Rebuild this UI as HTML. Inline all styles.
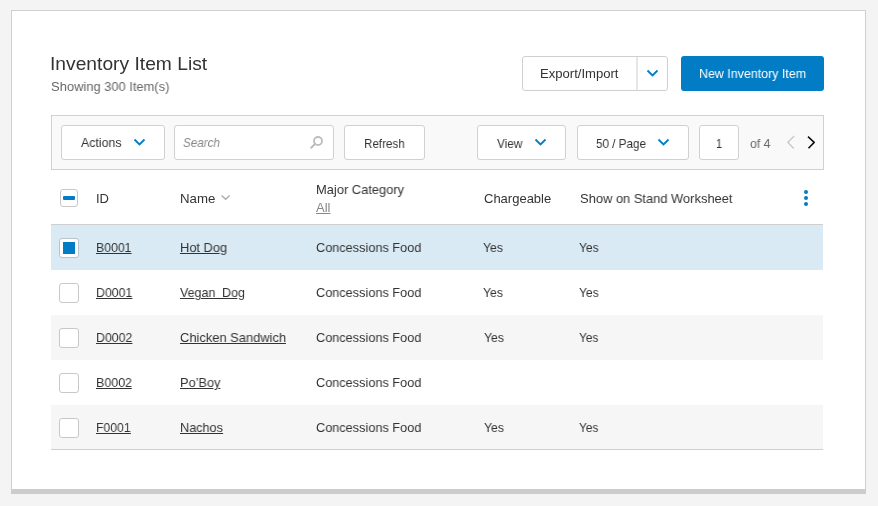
<!DOCTYPE html>
<html><head><meta charset="utf-8"><style>
html,body{margin:0;padding:0;}
body{width:878px;height:506px;background:#f4f4f4;position:relative;overflow:hidden;font-family:"Liberation Sans",sans-serif;}
.t{position:absolute;white-space:pre;line-height:1;will-change:transform;font-family:"Liberation Sans",sans-serif;}
.b{position:absolute;box-sizing:content-box;}
</style></head><body>
<div class="b" style="left:11px;top:10px;width:853px;height:478px;background:#fff;border:1px solid #cfcfcf;border-bottom:5px solid #cccccc;"></div>
<span class="t" style="left:50.00px;top:53.92px;font-size:19px;color:#333;transform:scaleX(1.0122);transform-origin:0 0;">Inventory Item List</span>
<span class="t" style="left:51.00px;top:80.20px;font-size:13px;color:#666;transform:scaleX(0.9931);transform-origin:0 0;">Showing 300 Item(s)</span>
<div class="b" style="left:522px;top:56px;width:144px;height:33px;border:1px solid #cfcfcf;border-radius:3px;background:#fff;"></div>
<div class="b" style="left:636px;top:57px;width:2px;height:33px;background:#e6e6e6;"></div>
<span class="t" style="left:540.00px;top:67.00px;font-size:13px;color:#333;transform:scaleX(1.0056);transform-origin:0 0;">Export/Import</span>
<svg class="b" style="left:646px;top:69px" width="13" height="9" viewBox="0 0 13 9"><polyline points="1.5,1.5 6.5,6.5 11.5,1.5" fill="none" stroke="#027cc4" stroke-width="1.8"/></svg>
<div class="b" style="left:681px;top:56px;width:143px;height:35px;background:#027cc4;border-radius:3px;"></div>
<span class="t" style="left:699.00px;top:67.20px;font-size:13px;color:#fff;transform:scaleX(0.9560);transform-origin:0 0;">New Inventory Item</span>
<div class="b" style="left:51px;top:115px;width:771px;height:53px;background:#f9f9f9;border:1px solid #d0d0d0;"></div>
<div class="b" style="left:61px;top:125px;width:102px;height:33px;background:#fff;border:1px solid #d0d0d0;border-radius:3px;"></div>
<span class="t" style="left:81.00px;top:136.00px;font-size:13px;color:#333;transform:scaleX(0.9477);transform-origin:0 0;">Actions</span>
<svg class="b" style="left:133px;top:138px" width="13" height="9" viewBox="0 0 13 9"><polyline points="1.5,1.5 6.5,6.5 11.5,1.5" fill="none" stroke="#027cc4" stroke-width="1.8"/></svg>
<div class="b" style="left:174px;top:125px;width:158px;height:33px;background:#fff;border:1px solid #d0d0d0;border-radius:3px;"></div>
<span class="t" style="left:183.00px;top:135.70px;font-size:13px;color:#888;transform:scaleX(0.8942);transform-origin:0 0;font-style:italic;">Search</span>
<svg class="b" style="left:308px;top:134px" width="18" height="18" viewBox="0 0 18 18"><circle cx="10" cy="7" r="4.0" fill="none" stroke="#bdbdbd" stroke-width="1.8"/><line x1="7.2" y1="9.8" x2="3.2" y2="13.8" stroke="#bdbdbd" stroke-width="2" stroke-linecap="round"/></svg>
<div class="b" style="left:344px;top:125px;width:79px;height:33px;background:#fff;border:1px solid #d0d0d0;border-radius:3px;"></div>
<span class="t" style="left:364.00px;top:136.60px;font-size:13px;color:#333;transform:scaleX(0.8954);transform-origin:0 0;">Refresh</span>
<div class="b" style="left:477px;top:125px;width:87px;height:33px;background:#fff;border:1px solid #d0d0d0;border-radius:3px;"></div>
<span class="t" style="left:497.00px;top:136.90px;font-size:13px;color:#333;transform:scaleX(0.9088);transform-origin:0 0;">View</span>
<svg class="b" style="left:534px;top:138px" width="13" height="9" viewBox="0 0 13 9"><polyline points="1.5,1.5 6.5,6.5 11.5,1.5" fill="none" stroke="#027cc4" stroke-width="1.8"/></svg>
<div class="b" style="left:577px;top:125px;width:110px;height:33px;background:#fff;border:1px solid #d0d0d0;border-radius:3px;"></div>
<span class="t" style="left:596.00px;top:136.60px;font-size:13px;color:#333;transform:scaleX(0.8977);transform-origin:0 0;">50 / Page</span>
<svg class="b" style="left:657px;top:138px" width="13" height="9" viewBox="0 0 13 9"><polyline points="1.5,1.5 6.5,6.5 11.5,1.5" fill="none" stroke="#027cc4" stroke-width="1.8"/></svg>
<div class="b" style="left:699px;top:125px;width:38px;height:33px;background:#fff;border:1px solid #d0d0d0;border-radius:3px;"></div>
<span class="t" style="left:716.00px;top:136.60px;font-size:13px;color:#333;transform:scaleX(0.8480);transform-origin:0 0;">1</span>
<span class="t" style="left:750.00px;top:136.60px;font-size:13px;color:#666;transform:scaleX(0.9387);transform-origin:0 0;">of 4</span>
<svg class="b" style="left:784px;top:134px" width="14" height="18" viewBox="0 0 14 18"><polyline points="10.2,2 3.8,8.3 9.8,14.5" fill="none" stroke="#c8c8c8" stroke-width="1.3"/></svg>
<svg class="b" style="left:804px;top:134px" width="14" height="18" viewBox="0 0 14 18"><polyline points="4,2.6 10.2,8.4 4.5,14.3" fill="none" stroke="#111" stroke-width="1.6" stroke-linejoin="round"/></svg>
<div class="b" style="left:51px;top:224px;width:772px;height:1px;background:#cfcfcf;"></div>
<div class="b" style="left:60px;top:189px;width:16px;height:16px;border:1px solid #c8c8c8;border-radius:3px;background:#fff;"></div>
<div class="b" style="left:63px;top:196px;width:12px;height:4px;background:#027cc4;border-radius:1px;"></div>
<span class="t" style="left:96.00px;top:191.80px;font-size:13px;color:#333;transform:scaleX(0.9938);transform-origin:0 0;">ID</span>
<span class="t" style="left:180.00px;top:191.80px;font-size:13px;color:#333;transform:scaleX(1.0175);transform-origin:0 0;">Name</span>
<svg class="b" style="left:219px;top:193px" width="13" height="9" viewBox="0 0 13 9"><polyline points="2.6,2.5 6.6,6.3 10.6,2.5" fill="none" stroke="#aaa" stroke-width="1.3"/></svg>
<span class="t" style="left:316.00px;top:182.90px;font-size:13px;color:#333;transform:scaleX(0.9919);transform-origin:0 0;">Major Category</span>
<span class="t" style="left:316.00px;top:201.10px;font-size:13px;color:#888;transform:scaleX(0.9948);transform-origin:0 0;text-decoration:underline;">All</span>
<span class="t" style="left:484.00px;top:191.80px;font-size:13px;color:#333;transform:scaleX(0.9938);transform-origin:0 0;">Chargeable</span>
<span class="t" style="left:580.00px;top:191.80px;font-size:13px;color:#333;transform:scaleX(0.9921);transform-origin:0 0;">Show on Stand Worksheet</span>
<div class="b" style="left:804px;top:190px;width:4px;height:4px;background:#027cc4;border-radius:50%;"></div>
<div class="b" style="left:804px;top:196px;width:4px;height:4px;background:#027cc4;border-radius:50%;"></div>
<div class="b" style="left:804px;top:202px;width:4px;height:4px;background:#027cc4;border-radius:50%;"></div>
<div class="b" style="left:51px;top:225px;width:772px;height:45px;background:#d9eaf5;"></div>
<div class="b" style="left:59px;top:238px;width:18px;height:18px;border:1px solid #b8c4cc;border-radius:3px;background:#fff;"></div>
<div class="b" style="left:63px;top:242px;width:12px;height:12px;background:#027cc4;"></div>
<span class="t" style="left:96.00px;top:240.70px;font-size:13px;color:#333;transform:scaleX(0.9430);transform-origin:0 0;text-decoration:underline;">B0001</span>
<span class="t" style="left:180.00px;top:240.70px;font-size:13px;color:#333;transform:scaleX(0.9877);transform-origin:0 0;text-decoration:underline;">Hot Dog</span>
<span class="t" style="left:316.00px;top:240.70px;font-size:13px;color:#333;transform:scaleX(0.9779);transform-origin:0 0;">Concessions Food</span>
<span class="t" style="left:483.00px;top:240.70px;font-size:13px;color:#333;transform:scaleX(0.9366);transform-origin:0 0;">Yes</span>
<span class="t" style="left:579.00px;top:240.70px;font-size:13px;color:#333;transform:scaleX(0.9231);transform-origin:0 0;">Yes</span>
<div class="b" style="left:51px;top:270px;width:772px;height:45px;background:#fff;"></div>
<div class="b" style="left:59px;top:283px;width:18px;height:18px;border:1px solid #c8c8c8;border-radius:3px;background:#fff;"></div>
<span class="t" style="left:96.00px;top:285.70px;font-size:13px;color:#333;transform:scaleX(0.9502);transform-origin:0 0;text-decoration:underline;">D0001</span>
<span class="t" style="left:180.00px;top:285.70px;font-size:13px;color:#333;transform:scaleX(0.9555);transform-origin:0 0;text-decoration:underline;">Vegan&nbsp; Dog</span>
<span class="t" style="left:316.00px;top:285.70px;font-size:13px;color:#333;transform:scaleX(0.9779);transform-origin:0 0;">Concessions Food</span>
<span class="t" style="left:483.00px;top:285.70px;font-size:13px;color:#333;transform:scaleX(0.9368);transform-origin:0 0;">Yes</span>
<span class="t" style="left:579.00px;top:285.70px;font-size:13px;color:#333;transform:scaleX(0.9254);transform-origin:0 0;">Yes</span>
<div class="b" style="left:51px;top:315px;width:772px;height:45px;background:#f6f6f6;"></div>
<div class="b" style="left:59px;top:328px;width:18px;height:18px;border:1px solid #c8c8c8;border-radius:3px;background:#fff;"></div>
<span class="t" style="left:96.00px;top:330.70px;font-size:13px;color:#333;transform:scaleX(0.9506);transform-origin:0 0;text-decoration:underline;">D0002</span>
<span class="t" style="left:180.00px;top:330.70px;font-size:13px;color:#333;transform:scaleX(0.9922);transform-origin:0 0;text-decoration:underline;">Chicken Sandwich</span>
<span class="t" style="left:316.00px;top:330.70px;font-size:13px;color:#333;transform:scaleX(0.9779);transform-origin:0 0;">Concessions Food</span>
<span class="t" style="left:484.00px;top:330.70px;font-size:13px;color:#333;transform:scaleX(0.9366);transform-origin:0 0;">Yes</span>
<span class="t" style="left:579.00px;top:330.70px;font-size:13px;color:#333;transform:scaleX(0.9099);transform-origin:0 0;">Yes</span>
<div class="b" style="left:51px;top:360px;width:772px;height:45px;background:#fff;"></div>
<div class="b" style="left:59px;top:373px;width:18px;height:18px;border:1px solid #c8c8c8;border-radius:3px;background:#fff;"></div>
<span class="t" style="left:96.00px;top:375.70px;font-size:13px;color:#333;transform:scaleX(0.9581);transform-origin:0 0;text-decoration:underline;">B0002</span>
<span class="t" style="left:180.00px;top:375.70px;font-size:13px;color:#333;transform:scaleX(0.9813);transform-origin:0 0;text-decoration:underline;">Po&#8217;Boy</span>
<span class="t" style="left:316.00px;top:375.70px;font-size:13px;color:#333;transform:scaleX(0.9779);transform-origin:0 0;">Concessions Food</span>
<div class="b" style="left:51px;top:405px;width:772px;height:45px;background:#f6f6f6;"></div>
<div class="b" style="left:59px;top:418px;width:18px;height:18px;border:1px solid #c8c8c8;border-radius:3px;background:#fff;"></div>
<span class="t" style="left:96.00px;top:420.70px;font-size:13px;color:#333;transform:scaleX(0.9350);transform-origin:0 0;text-decoration:underline;">F0001</span>
<span class="t" style="left:180.00px;top:420.70px;font-size:13px;color:#333;transform:scaleX(0.9760);transform-origin:0 0;text-decoration:underline;">Nachos</span>
<span class="t" style="left:316.00px;top:420.70px;font-size:13px;color:#333;transform:scaleX(0.9779);transform-origin:0 0;">Concessions Food</span>
<span class="t" style="left:484.00px;top:420.70px;font-size:13px;color:#333;transform:scaleX(0.9366);transform-origin:0 0;">Yes</span>
<span class="t" style="left:579.00px;top:420.70px;font-size:13px;color:#333;transform:scaleX(0.9099);transform-origin:0 0;">Yes</span>
<div class="b" style="left:51px;top:449px;width:772px;height:1px;background:#cfcfcf;"></div>
</body></html>
